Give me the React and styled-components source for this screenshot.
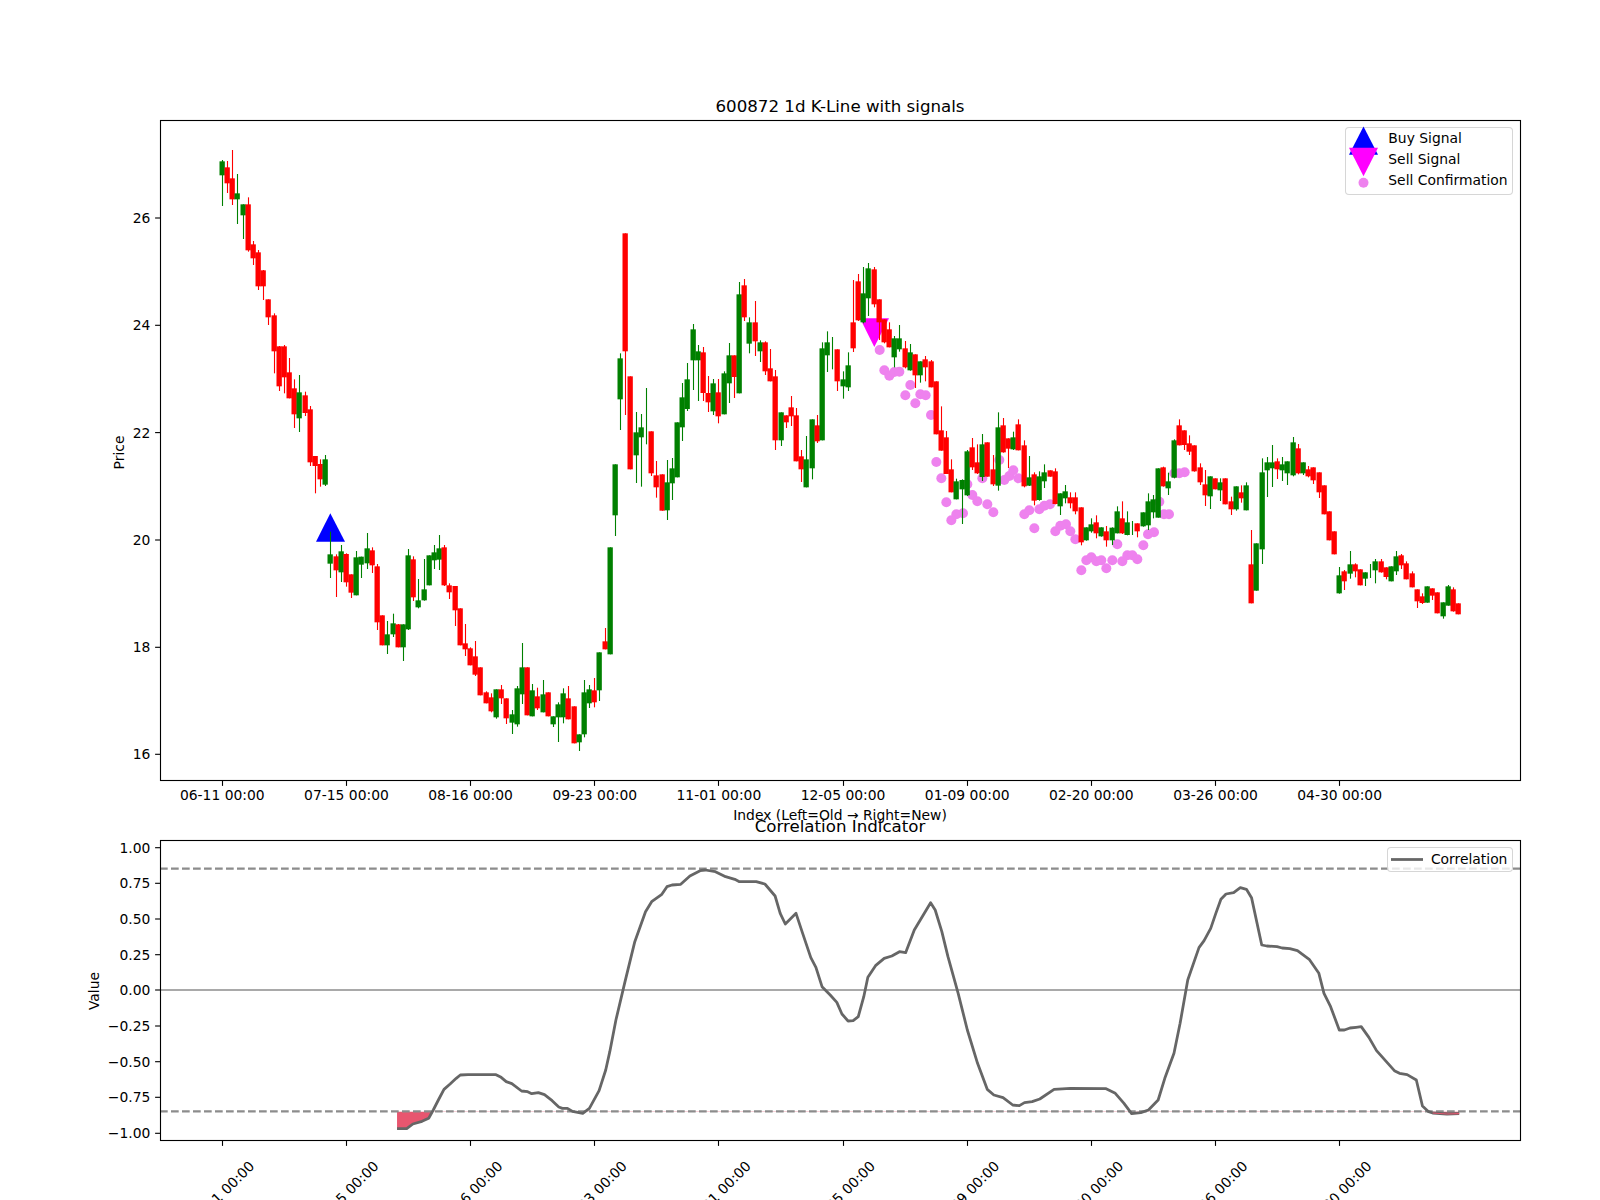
import React from "react";
import styled, { createGlobalStyle } from "styled-components";

const GlobalStyle = createGlobalStyle`
  html, body {
    margin: 0;
    padding: 0;
    background: white;
  }
`;

const UP = "#008000";
const DOWN = "#ff0000";
const DATES = ["06-11", "07-15", "08-16", "09-23", "11-01", "12-05", "01-09", "02-20", "03-26", "04-30"];
const TICKS = DATES.map((_, i) => 222.3 + 124.15 * i);

// candles were read off in crops of the chart: [colour, x, wick top, body top, body bottom, wick bottom]
const candleCrops = [
  {
    ox: 150,
    oy: 110,
    rows: [
      ["g", 216, 150, 154, 196, 288], ["r", 231, 153, 172, 220, 249], ["r", 246, 120, 205, 268, 285],
      ["g", 261, 192, 250, 268, 342], ["g", 279, 283, 283, 316, 387], ["r", 294, 262, 283, 421, 425],
      ["r", 309, 393, 403, 445, 465], ["r", 324, 420, 427, 529, 540], ["r", 339, 480, 481, 529, 570],
      ["r", 354, 568, 568, 622, 645], ["r", 372, 610, 616, 724, 790], ["r", 387, 708, 709, 829, 843],
      ["r", 402, 705, 709, 802, 850], ["r", 417, 744, 787, 865, 865], ["r", 432, 808, 835, 913, 954],
      ["g", 447, 795, 847, 925, 966], ["r", 465, 845, 856, 909, 918], ["r", 480, 888, 898, 1057, 1068],
    ],
  },
  {
    ox: 150,
    oy: 450,
    rows: [
      ["r", 495, 18, 18, 48, 130], ["r", 510, 28, 42, 88, 110], ["g", 525, 15, 28, 104, 108],
      ["g", 540, 245, 313, 341, 384], ["r", 558, 313, 319, 361, 441], ["g", 573, 285, 304, 367, 396],
      ["r", 588, 310, 312, 397, 410], ["r", 603, 373, 373, 428, 444], ["g", 618, 303, 322, 436, 436],
      ["g", 633, 320, 320, 344, 384], ["g", 651, 249, 295, 340, 357], ["r", 666, 292, 301, 346, 369],
      ["r", 681, 342, 349, 517, 540], ["r", 696, 496, 496, 586, 586], ["g", 711, 513, 553, 586, 612],
      ["g", 729, 491, 520, 553, 561], ["r", 744, 522, 523, 592, 592], ["g", 759, 523, 523, 592, 633],
      ["g", 774, 297, 316, 538, 540], ["r", 789, 319, 328, 442, 453], ["g", 804, 387, 451, 472, 475],
      ["g", 822, 327, 418, 451, 452], ["g", 837, 316, 316, 406, 406], ["g", 852, 285, 307, 331, 357],
      ["g", 867, 255, 295, 329, 360], ["r", 882, 285, 292, 406, 408], ["r", 897, 400, 406, 427, 447],
      ["r", 915, 408, 408, 481, 528], ["r", 930, 475, 475, 586, 586], ["r", 945, 522, 580, 598, 618],
      ["r", 960, 592, 595, 646, 646], ["r", 975, 573, 619, 674, 678], ["r", 990, 652, 652, 736, 736],
      ["r", 1008, 724, 727, 760, 760], ["r", 1023, 730, 742, 784, 787], ["g", 1038, 718, 718, 802, 806],
    ],
  },
  {
    ox: 480,
    oy: 450,
    rows: [
      ["r", 63, 705, 718, 745, 762], ["r", 78, 745, 745, 805, 822], ["g", 96, 780, 793, 818, 852],
      ["g", 111, 708, 715, 823, 830], ["g", 126, 579, 652, 733, 762], ["r", 141, 652, 652, 796, 796],
      ["g", 156, 702, 721, 799, 799], ["r", 171, 713, 739, 775, 780], ["g", 189, 690, 733, 787, 787],
      ["r", 204, 727, 727, 799, 799], ["g", 219, 799, 799, 823, 831], ["g", 234, 757, 763, 802, 876],
      ["g", 249, 715, 730, 802, 820], ["r", 264, 708, 745, 808, 808], ["r", 282, 769, 769, 880, 880],
      ["g", 297, 853, 853, 877, 903], ["g", 312, 690, 727, 853, 862], ["g", 327, 705, 718, 760, 774],
      ["r", 342, 684, 721, 757, 772], ["g", 357, 607, 607, 721, 753], ["r", 375, 534, 574, 598, 598],
      ["g", 390, 292, 292, 613, 613], ["g", 405, 43, 43, 196, 258],
    ],
  },
  {
    ox: 600,
    oy: 210,
    rows: [
      ["g", 60, 430, 445, 568, 660], ["r", 75, 70, 70, 424, 615], ["r", 90, 499, 499, 778, 778],
      ["g", 108, 606, 667, 736, 819], ["g", 123, 612, 652, 682, 830], ["g", 138, 534, 672, 672, 703],
      ["r", 153, 664, 664, 790, 798], ["r", 168, 753, 796, 832, 863], ["r", 186, 793, 793, 902, 902],
      ["g", 201, 750, 817, 901, 930], ["g", 216, 744, 775, 820, 870], ["g", 231, 637, 637, 802, 802],
      ["g", 246, 519, 562, 652, 693], ["g", 261, 459, 508, 597, 603], ["g", 279, 342, 358, 451, 540],
      ["g", 294, 405, 424, 451, 573], ["r", 309, 411, 427, 549, 573], ["r", 324, 498, 549, 577, 606],
      ["g", 339, 507, 520, 604, 615], ["r", 354, 507, 547, 619, 640], ["g", 372, 484, 490, 613, 613],
      ["g", 387, 399, 436, 520, 579], ["r", 402, 436, 436, 501, 564], ["g", 417, 216, 253, 550, 550],
      ["r", 432, 207, 226, 322, 333], ["g", 447, 322, 337, 401, 430], ["r", 465, 273, 337, 394, 438],
      ["g", 480, 391, 397, 424, 456], ["r", 495, 394, 397, 484, 495], ["r", 510, 417, 475, 514, 514],
      ["r", 525, 480, 499, 691, 720], ["g", 543, 607, 607, 691, 708], ["r", 558, 616, 616, 637, 654],
      ["r", 573, 558, 592, 619, 648], ["r", 588, 594, 616, 754, 754], ["r", 603, 720, 739, 778, 816],
      ["g", 618, 678, 748, 832, 832], ["g", 636, 628, 628, 775, 808], ["r", 651, 615, 646, 694, 699],
      ["g", 666, 397, 415, 691, 691], ["g", 681, 364, 397, 436, 486], ["g", 697, 381, 430, 430, 478],
      ["r", 711, 418, 418, 514, 543], ["g", 729, 484, 508, 529, 566], ["g", 744, 427, 466, 532, 543],
      ["r", 759, 210, 337, 415, 426], ["r", 774, 192, 214, 331, 333], ["g", 789, 171, 250, 337, 340],
      ["g", 804, 159, 175, 265, 318], ["r", 822, 171, 178, 283, 292],
    ],
  },
  {
    ox: 850,
    oy: 250,
    rows: [
      ["r", 87, 148, 148, 217, 270], ["r", 102, 208, 208, 277, 280], ["r", 117, 217, 238, 292, 292],
      ["g", 132, 258, 265, 322, 352], ["g", 147, 225, 265, 298, 305], ["r", 165, 273, 295, 352, 355],
      ["g", 180, 282, 307, 361, 362], ["r", 195, 313, 313, 376, 414], ["g", 210, 334, 334, 376, 398],
      ["r", 225, 318, 328, 352, 394], ["r", 243, 330, 334, 412, 412], ["r", 258, 394, 394, 553, 553],
      ["r", 273, 469, 541, 602, 602], ["r", 288, 543, 562, 672, 672], ["r", 303, 628, 658, 727, 727],
      ["g", 318, 686, 694, 748, 748], ["g", 336, 688, 690, 718, 822], ["g", 351, 600, 604, 736, 738],
      ["r", 366, 564, 592, 652, 660], ["r", 381, 583, 637, 670, 672], ["g", 396, 552, 583, 681, 693],
      ["r", 411, 577, 577, 680, 680], ["r", 429, 615, 658, 703, 708], ["g", 444, 487, 532, 707, 722],
      ["r", 459, 504, 526, 607, 608], ["r", 474, 565, 565, 596, 654], ["g", 489, 545, 562, 598, 600],
      ["r", 504, 508, 523, 601, 601], ["r", 522, 571, 586, 709, 712], ["g", 537, 618, 682, 707, 708],
      ["r", 552, 667, 673, 752, 766], ["g", 567, 664, 679, 750, 752], ["g", 582, 643, 667, 694, 714],
      ["r", 600, 661, 661, 680, 680], ["r", 615, 655, 664, 762, 763], ["g", 630, 730, 730, 769, 795],
      ["g", 645, 705, 724, 745, 760], ["r", 660, 727, 742, 760, 775], ["r", 675, 727, 742, 784, 793],
      ["r", 693, 772, 772, 877, 886], ["g", 708, 832, 832, 871, 872], ["g", 723, 805, 823, 844, 848],
      ["r", 738, 796, 817, 850, 865], ["g", 753, 832, 832, 859, 860], ["r", 768, 828, 844, 871, 890],
      ["g", 786, 832, 833, 871, 885], ["g", 801, 769, 784, 850, 850], ["r", 816, 754, 805, 850, 852],
      ["g", 831, 784, 817, 855, 856], ["g", 847, 813, 834, 834, 855], ["r", 861, 820, 820, 844, 862],
      ["g", 879, 787, 787, 829, 830], ["g", 894, 730, 754, 826, 840], ["g", 909, 735, 748, 787, 805],
      ["g", 924, 655, 655, 803, 803], ["r", 939, 650, 652, 709, 710], ["g", 954, 668, 694, 715, 735],
      ["g", 972, 568, 571, 683, 685], ["r", 987, 508, 526, 586, 586], ["r", 1002, 541, 541, 585, 600],
      ["r", 1017, 556, 580, 605, 615], ["r", 1032, 586, 586, 664, 665],
    ],
  },
  {
    ox: 1130,
    oy: 380,
    rows: [
      ["r", 210, 250, 262, 307, 315], ["r", 225, 270, 313, 346, 378], ["g", 240, 289, 289, 349, 387],
      ["r", 255, 295, 295, 328, 328], ["g", 270, 295, 307, 331, 363], ["r", 285, 295, 295, 373, 373],
      ["r", 303, 350, 364, 388, 405], ["g", 318, 319, 319, 388, 392], ["r", 333, 316, 337, 355, 368],
      ["g", 348, 307, 316, 391, 391], ["r", 363, 450, 553, 670, 670], ["g", 378, 490, 490, 632, 632],
      ["g", 396, 235, 277, 508, 552], ["g", 411, 231, 247, 271, 351], ["g", 426, 195, 247, 265, 321],
      ["r", 441, 235, 244, 268, 297], ["g", 456, 231, 253, 271, 303], ["g", 471, 244, 244, 280, 315],
      ["g", 489, 171, 187, 286, 289], ["r", 504, 192, 205, 280, 283], ["g", 519, 247, 247, 280, 285],
      ["r", 534, 258, 268, 289, 292], ["r", 549, 262, 262, 301, 312], ["r", 567, 277, 277, 337, 354],
      ["r", 582, 316, 316, 403, 403], ["r", 597, 394, 394, 481, 481], ["r", 612, 454, 454, 523, 523],
      ["g", 627, 561, 586, 640, 641], ["r", 642, 570, 574, 604, 630], ["g", 660, 513, 553, 581, 596],
      ["r", 675, 550, 553, 574, 592], ["r", 690, 568, 568, 616, 616], ["g", 705, 577, 577, 596, 618],
      ["g", 720, 552, 572, 572, 594], ["g", 735, 537, 544, 571, 610], ["r", 753, 537, 544, 577, 578],
      ["r", 768, 562, 562, 591, 598], ["g", 783, 559, 559, 604, 604], ["g", 798, 513, 529, 574, 585],
      ["r", 813, 522, 526, 556, 567], ["r", 828, 544, 550, 598, 598], ["r", 846, 574, 580, 622, 622],
      ["r", 861, 628, 628, 664, 684], ["r", 876, 640, 649, 669, 672], ["g", 891, 619, 619, 668, 668],
      ["r", 906, 625, 625, 647, 660], ["r", 921, 637, 637, 700, 700], ["g", 939, 667, 667, 709, 716],
      ["g", 954, 615, 619, 677, 677], ["r", 969, 622, 628, 694, 695], ["r", 984, 670, 670, 703, 703],
    ],
  },
];

const candles = candleCrops.flatMap(({ ox, oy, rows }) =>
  rows.map(([c, x, wt, bt, bb, wb]) => ({
    color: c === "g" ? UP : DOWN,
    x: Math.floor(ox + x / 3) + 0.5,
    wickTop: oy + wt / 3,
    top: oy + bt / 3,
    bottom: oy + bb / 3,
    wickBottom: oy + wb / 3,
  }))
);

const confirmations = [
  [89, 300], [103, 361], [118, 377], [133, 366], [148, 365], [181, 405], [166, 436], [196, 460],
  [211, 433], [227, 436], [243, 495], [259, 636], [274, 685], [289, 757], [304, 811], [319, 793],
  [339, 790], [352, 703], [367, 735], [382, 754], [412, 763], [430, 787], [397, 685], [448, 630],
  [463, 690], [478, 678], [490, 661], [505, 685], [523, 793], [538, 781], [553, 835], [568, 778],
  [583, 767], [600, 763], [616, 844], [631, 827], [648, 823], [661, 844], [676, 868], [694, 961],
  [709, 931], [724, 922], [739, 934], [754, 931], [769, 955], [787, 931], [802, 883], [817, 934],
  [832, 916], [847, 916], [862, 928], [880, 886], [894, 853], [912, 847], [928, 755], [942, 793],
  [957, 793], [973, 670], [988, 670], [1004, 667],
].map(([x, y]) => [850 + x / 3, 250 + y / 3]);

const leftCurve = [
  [641, 986], [660, 986], [672, 972], [690, 964], [703, 955], [712, 930], [722, 900], [733, 868],
  [745, 852], [757, 835], [765, 825], [780, 824], [835, 824], [845, 832], [855, 845], [866, 851],
  [885, 873], [897, 875], [905, 881], [918, 878], [930, 884], [945, 902], [958, 921], [965, 925],
  [975, 925], [985, 934], [1005, 940], [1018, 925], [1037, 872], [1050, 810], [1058, 755], [1070, 660],
  [1087, 550], [1107, 425], [1128, 335], [1140, 305], [1160, 283], [1170, 260], [1180, 255], [1197, 253],
  [1215, 228], [1235, 212], [1245, 210], [1265, 215], [1285, 230], [1303, 238], [1312, 245], [1345, 245],
  [1362, 252], [1382, 288], [1392, 340], [1402, 372], [1423, 340], [1436, 400], [1452, 473], [1462, 502],
  [1474, 560], [1490, 585], [1503, 607], [1513, 642], [1525, 663], [1535, 662], [1545, 650],
].map(([x, y]) => [70 + x / 1.96, 800 + y / 3]);

const rightCurve = [
  [125, 590], [133, 532], [148, 497], [165, 475], [180, 468], [195, 455], [207, 458], [224, 390],
  [256, 308], [265, 330], [278, 395], [290, 470], [310, 580], [328, 690], [348, 790], [367, 868],
  [380, 885], [398, 893], [417, 915], [430, 917], [440, 908], [455, 905], [470, 897], [498, 868],
  [530, 865], [600, 866], [618, 880], [635, 910], [650, 941], [668, 938], [683, 930], [702, 900],
  [715, 835], [733, 760], [745, 670], [760, 540], [782, 443], [792, 422], [805, 385], [815, 340],
  [825, 298], [835, 282], [850, 278], [863, 263], [875, 268], [885, 293], [905, 435], [915, 438],
  [935, 440], [945, 444], [960, 446], [975, 452], [998, 478], [1017, 520], [1027, 580], [1040, 620],
  [1057, 690], [1067, 690], [1078, 684], [1090, 682], [1100, 680], [1115, 712], [1130, 752], [1165, 812],
  [1175, 820], [1190, 824], [1208, 840], [1220, 918], [1232, 935], [1240, 939], [1268, 942], [1292, 941],
].map(([x, y]) => [800 + x / 1.96, 800 + y / 3]);

const curve = [...leftCurve, ...rightCurve];
const toPoints = (list) => list.map((p) => p.join(",")).join(" ");
const LOWER = 1111.4;
const UPPER = 868.6;
const ZERO = 990;
const fillPoints = toPoints([...curve, [curve[curve.length - 1][0], LOWER], [curve[0][0], LOWER]]);

const PRICE_TICKS = [
  ["26", 218],
  ["24", 325.3],
  ["22", 432.6],
  ["20", 540],
  ["18", 647.3],
  ["16", 754.3],
];
const VALUE_TICKS = [
  ["1.00", 847.7],
  ["0.75", 883.3],
  ["0.50", 919],
  ["0.25", 954.7],
  ["0.00", 990],
  ["\u22120.25", 1026],
  ["\u22120.50", 1061.7],
  ["\u22120.75", 1097.3],
  ["\u22121.00", 1133.3],
];

const Page = styled.div`
  width: 1600px;
  height: 1200px;
  overflow: hidden;
  background: white;
  display: flex;
  flex-direction: column;
  font-family: "DejaVu Sans", sans-serif;
`;

const Plot = styled.section`
  position: relative;
  width: 1600px;
  height: ${(props) => props.$height}px;
`;

const PlotSvg = styled.svg`
  display: block;
  width: 1600px;
  height: 100%;
  overflow: visible;
`;

const Frame = styled.rect`
  fill: none;
  stroke: black;
  stroke-width: 1.11;
`;

const Tick = styled.line`
  stroke: black;
  stroke-width: 1.11;
`;

const Label = styled.text`
  font-family: "DejaVu Sans", sans-serif;
  font-size: 13.89px;
  fill: black;
`;

const PlotTitle = styled.text`
  font-family: "DejaVu Sans", sans-serif;
  font-size: 16.67px;
  fill: black;
  text-anchor: middle;
`;

const Wick = styled.line`
  stroke: ${(props) => props.$color};
  stroke-width: 1.1;
`;

const Body = styled.rect`
  fill: ${(props) => props.$color};
`;

const GuideLine = styled.line`
  stroke: ${(props) => (props.$dashed ? "#8c8c8c" : "#a9a9a9")};
  stroke-width: 2.08;
  stroke-dasharray: ${(props) => (props.$dashed ? "7.7 3.3" : "none")};
`;

const CurveLine = styled.polyline`
  fill: none;
  stroke: #666666;
  stroke-width: 2.78;
  stroke-linejoin: round;
`;

const CurveTint = styled.polyline`
  fill: none;
  stroke: #e8566f;
  stroke-width: 1.2;
`;

const Legend = styled.div`
  position: absolute;
  top: ${(props) => props.$top}px;
  right: 86.7px;
  box-sizing: border-box;
  width: ${(props) => props.$width}px;
  height: ${(props) => props.$boxHeight}px;
  padding-bottom: ${(props) => props.$lift || 0}px;
  background: rgba(255, 255, 255, 0.8);
  border: 1px solid rgba(204, 204, 204, 0.8);
  border-radius: 4px;
  display: flex;
  flex-direction: column;
  justify-content: center;
`;

const LegendRow = styled.div`
  display: flex;
  align-items: center;
  height: 21px;
  flex: none;
  padding-left: ${(props) => props.$indent}px;
  gap: ${(props) => props.$gap}px;
`;

const LegendMarker = styled.svg`
  display: block;
  flex: none;
  width: ${(props) => props.$size}px;
  height: 21px;
  overflow: visible;
`;

const LegendText = styled.span`
  font-size: 13.89px;
  line-height: 21px;
  color: black;
  white-space: nowrap;
`;

function XTicks({ y }) {
  return TICKS.map((x) => (
    <Tick key={x} x1={Math.floor(x) + 0.5} x2={Math.floor(x) + 0.5} y1={y} y2={y + 5.4} />
  ));
}

function YTicks({ ticks }) {
  return ticks.map(([text, y]) => (
    <g key={text}>
      <Tick x1={155.1} x2={160} y1={y} y2={y} />
      <Label x={150.3} y={y + 5} textAnchor="end">
        {text}
      </Label>
    </g>
  ));
}

function PriceChart() {
  return (
    <Plot $height={826}>
      <PlotSvg viewBox="0 0 1600 826">
        <PlotTitle x={840} y={112}>
          600872 1d K-Line with signals
        </PlotTitle>
        <polygon points="330.3,513.3 316,541.7 345,541.7" fill="#0000ff" />
        <polygon points="860,318.3 889,318.3 874.3,347" fill="#ff00ff" />
        {confirmations.map(([cx, cy], i) => (
          <circle key={i} cx={cx} cy={cy} r={5} fill="#ee82ee" />
        ))}
        {candles.map((c, i) => (
          <g key={i}>
            <Wick $color={c.color} x1={c.x} x2={c.x} y1={c.wickTop} y2={c.wickBottom} />
            {c.bottom > c.top && (
              <Body $color={c.color} x={c.x - 3} y={c.top} width={5.33} height={c.bottom - c.top} />
            )}
          </g>
        ))}
        <Frame x={160.5} y={120.5} width={1360} height={660} />
        <XTicks y={780.5} />
        {TICKS.map((x, i) => (
          <Label key={x} x={x} y={800} textAnchor="middle">
            {DATES[i]} 00:00
          </Label>
        ))}
        <YTicks ticks={PRICE_TICKS} />
        <Label x={0} y={0} textAnchor="middle" transform="translate(124 452.5) rotate(-90)">
          Price
        </Label>
        <Label x={840} y={820} textAnchor="middle">
          Index (Left=Old → Right=New)
        </Label>
      </PlotSvg>
      <Legend $top={127.3} $width={168.6} $boxHeight={67.5} $lift={4}>
        <LegendRow $indent={3.6} $gap={10}>
          <LegendMarker $size={29} viewBox="0 0 29 21">
            <polygon points="14.5,-1.55 0,26.75 29,26.75" fill="#0000ff" />
          </LegendMarker>
          <LegendText>Buy Signal</LegendText>
        </LegendRow>
        <LegendRow $indent={3.6} $gap={10}>
          <LegendMarker $size={29} viewBox="0 0 29 21">
            <polygon points="0,-1.25 29,-1.25 14.5,27.15" fill="#ff00ff" />
          </LegendMarker>
          <LegendText>Sell Signal</LegendText>
        </LegendRow>
        <LegendRow $indent={3.6} $gap={10}>
          <LegendMarker $size={29} viewBox="0 0 29 21">
            <circle cx={14.5} cy={12.75} r={5} fill="#ee82ee" />
          </LegendMarker>
          <LegendText>Sell Confirmation</LegendText>
        </LegendRow>
      </Legend>
    </Plot>
  );
}

function CorrelationChart() {
  return (
    <Plot $height={374}>
      <PlotSvg viewBox="0 826 1600 374">
        <PlotTitle x={840} y={832}>
          Correlation Indicator
        </PlotTitle>
        <clipPath id="below-lower">
          <rect x={160} y={LOWER} width={1360} height={29} />
        </clipPath>
        <polygon points={fillPoints} fill="#e8566f" clipPath="url(#below-lower)" />
        <GuideLine x1={160} x2={1520} y1={ZERO} y2={ZERO} />
        <GuideLine $dashed x1={160} x2={1520} y1={UPPER} y2={UPPER} />
        <GuideLine $dashed x1={160} x2={1520} y1={LOWER} y2={LOWER} />
        <CurveLine points={toPoints(curve)} />
        <CurveTint points={toPoints(curve.slice(-3))} />
        <Frame x={160.5} y={840.5} width={1360} height={300} />
        <XTicks y={1140.5} />
        <YTicks ticks={VALUE_TICKS} />
        {TICKS.map((x, i) => (
          <Label key={x} x={0} y={0} textAnchor="middle" transform={`translate(${x + 3} 1197) rotate(-45)`}>
            {DATES[i]} 00:00
          </Label>
        ))}
        <Label x={0} y={0} textAnchor="middle" transform="translate(99 991) rotate(-90)">
          Value
        </Label>
      </PlotSvg>
      <Legend $top={21.3} $width={126.6} $boxHeight={25}>
        <LegendRow $indent={3.6} $gap={7.6}>
          <LegendMarker $size={32} viewBox="0 0 32 21">
            <line x1={0} x2={32} y1={10.5} y2={10.5} stroke="#666666" strokeWidth={2.78} />
          </LegendMarker>
          <LegendText>Correlation</LegendText>
        </LegendRow>
      </Legend>
    </Plot>
  );
}

export default function App() {
  return (
    <>
      <GlobalStyle />
      <Page>
        <PriceChart />
        <CorrelationChart />
      </Page>
    </>
  );
}
